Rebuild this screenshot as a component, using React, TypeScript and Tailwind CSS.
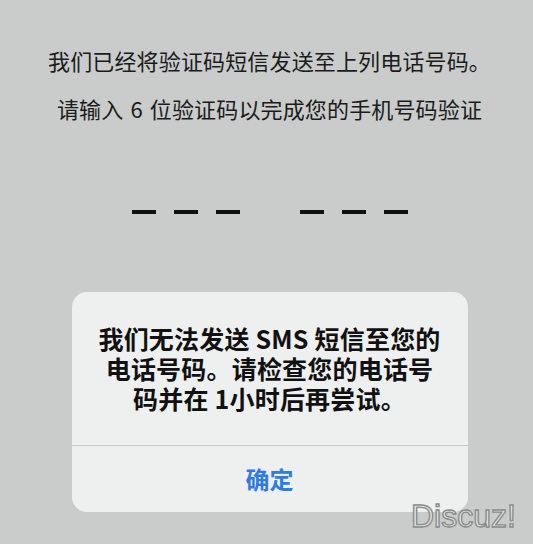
import React from "react";

const cjk = { fontFamily: '"Noto Sans CJK SC", "Noto Sans", sans-serif' };

function CodeDashes() {
  const group = (
    <div className="flex gap-[18px]">
      <span className="block h-[4px] w-[24px] bg-[#111]" />
      <span className="block h-[4px] w-[24px] bg-[#111]" />
      <span className="block h-[4px] w-[24px] bg-[#111]" />
    </div>
  );
  return (
    <div className="flex gap-[60px]">
      {group}
      {group}
    </div>
  );
}

export default function App() {
  return (
    <div
      className="relative flex h-[544px] w-[533px] flex-col items-center overflow-hidden bg-[#c9cccb] pl-[6px] pt-[45px] text-[#1b1b1b]"
      style={cjk}
    >
      <p className="text-[22px] leading-[30px] tracking-[0.15px]">我们已经将验证码短信发送至上列电话号码。</p>
      <p className="mt-[18px] text-[22px] leading-[30px] tracking-[0.15px]">
        请输入<span className="mx-[7px]">6</span>位验证码以完成您的手机号码验证
      </p>

      <div className="mt-[87px]">
        <CodeDashes />
      </div>

      <div className="mt-[78px] w-[396px] overflow-hidden rounded-[15px] bg-[#eef0ef]">
        <p className="px-4 pb-[32px] pt-[31px] text-center text-[25px] font-semibold leading-[30px] tracking-[0.2px] text-[#111]">
          我们无法发送 SMS 短信至您的
          <br />
          电话号码。请检查您的电话号
          <br />
          码并在 1小时后再尝试。
        </p>
        <div className="h-px bg-[#c6c9c8]" />
        <button className="flex h-[66px] w-full items-center justify-center text-[24px] font-semibold text-[#2f7be6]">
          确定
        </button>
      </div>

      <span
        className="absolute left-[411px] top-[496px] text-[32px] leading-[40px] text-[#e6e8e7] [-webkit-text-stroke:1.4px_#8a8c8b]"
        style={{ fontFamily: '"Liberation Sans", Arial, sans-serif' }}
      >
        Discuz!
      </span>
    </div>
  );
}
